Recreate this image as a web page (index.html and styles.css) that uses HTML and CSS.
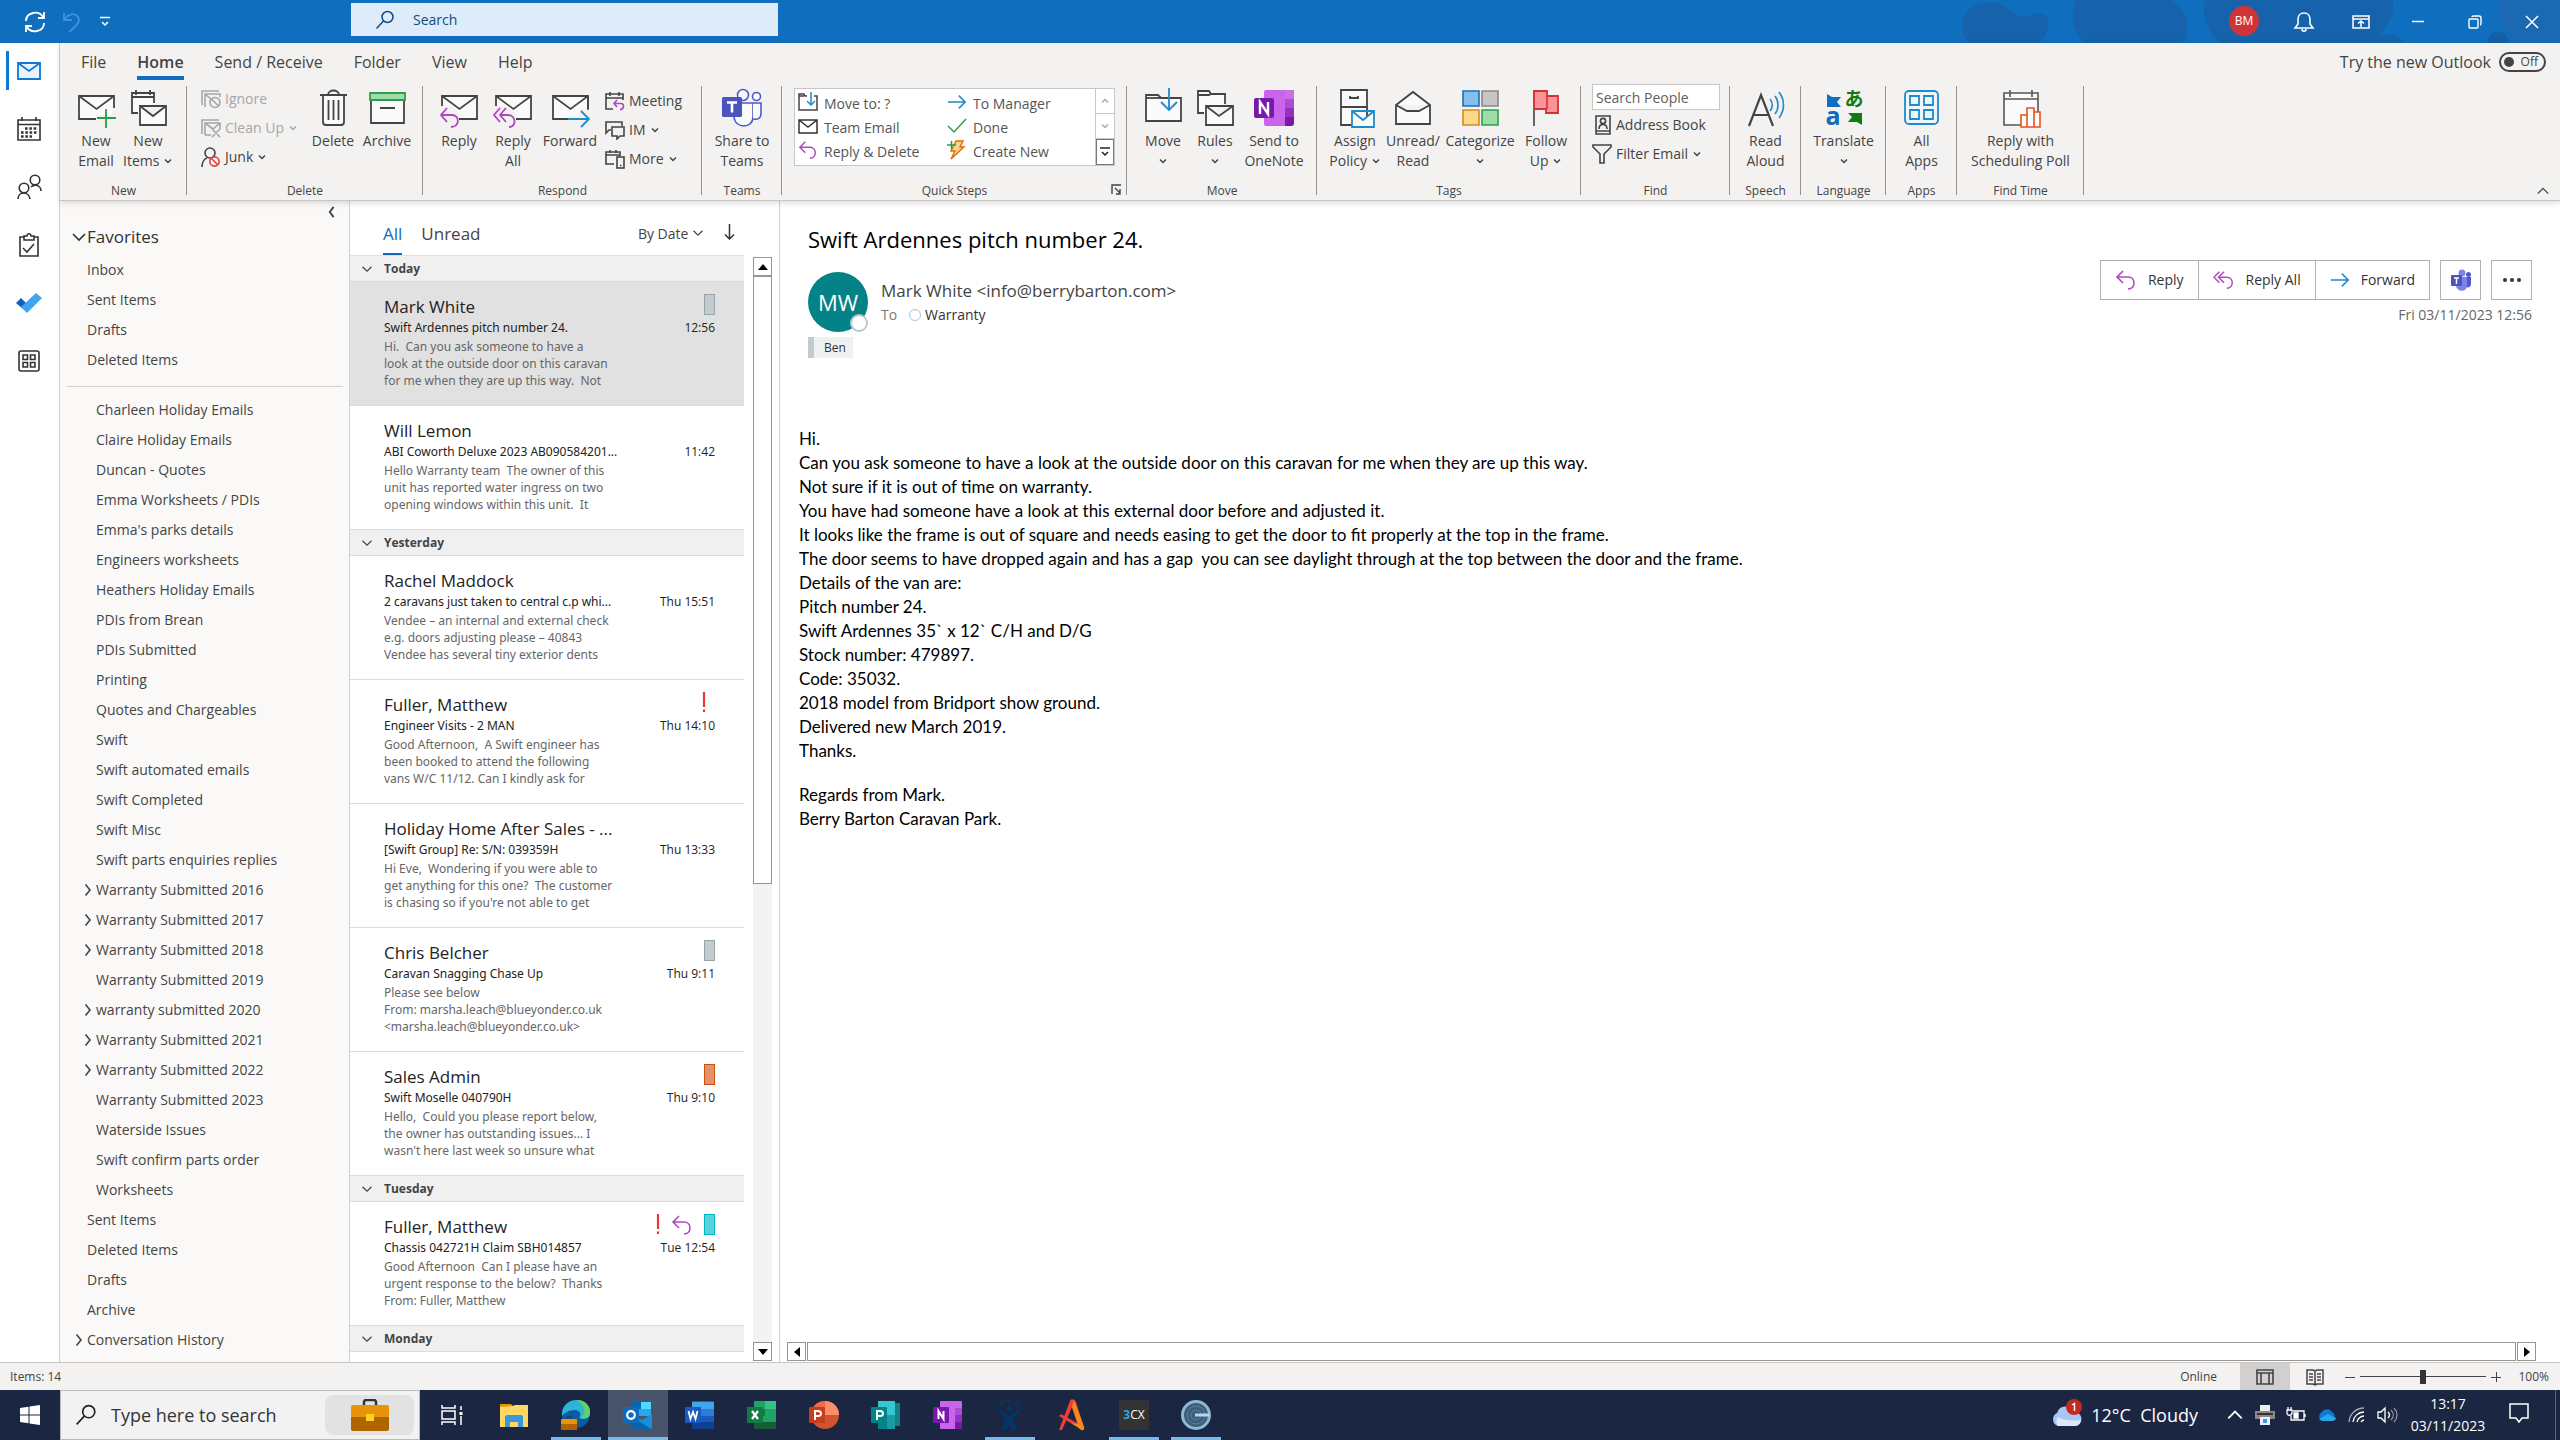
FILE: index.html
```html
<!DOCTYPE html>
<html lang="en">
<head>
<meta charset="utf-8">
<title>Inbox - Outlook</title>
<link rel="stylesheet" href="styles.css">
</head>
<body>
<svg class="sprite" aria-hidden="true">
  <symbol id="chev" viewBox="0 0 10 10"><path d="M2 3.500l3 3 3-3" fill="none" stroke="currentColor" stroke-width="1.500"/></symbol>
  <symbol id="chev-lg" viewBox="0 0 16 16"><path d="M2 5l6 6 6-6" fill="none" stroke="currentColor" stroke-width="1.600"/></symbol>
  <symbol id="chev-r" viewBox="0 0 8 14"><path d="M1.500 1.500l4.500 5.500-4.500 5.500" fill="none" stroke="currentColor" stroke-width="1.600"/></symbol>
  <symbol id="env" viewBox="0 0 40 40"><path d="M3 8h35v23H3z" fill="#fafafa" stroke="#444" stroke-width="1.800"/><path d="M3 8l17.500 13L38 8" fill="none" stroke="#444" stroke-width="1.600"/></symbol>
  <symbol id="reply" viewBox="0 0 22 22"><path d="M8 2L2 8l6 6M2 8h11c4 0 6 3 6 6s-2 6-6 6" fill="none" stroke="#b146c2" stroke-width="1.600"/></symbol>
  <symbol id="reply-all" viewBox="0 0 24 22"><path d="M7 2L1 8l6 6M12 2L6 8l6 6M6 8h9c4 0 6 3 6 6s-2 6-6 6" fill="none" stroke="#b146c2" stroke-width="1.600"/></symbol>
  <symbol id="fwd" viewBox="0 0 22 22"><path d="M1 11h19M13 4l7 7-7 7" fill="none" stroke="#1e8bcd" stroke-width="1.700"/></symbol>
  <symbol id="lens" viewBox="0 0 20 20"><circle cx="12.500" cy="7" r="5.500" fill="none" stroke="currentColor" stroke-width="1.500"/><path d="M8.500 11L1.500 18.500" stroke="currentColor" stroke-width="1.500"/></symbol>
  <symbol id="teams" viewBox="0 0 40 40"><path d="M12 15h19v14c0 12-18 12-19 0z" fill="#fafafa" stroke="#5059c9" stroke-width="1.600"/><path d="M31 15h8v11c0 4-3 6-8 5" fill="#fafafa" stroke="#5059c9" stroke-width="1.600"/><circle cx="21" cy="7" r="5.500" fill="#fafafa" stroke="#5059c9" stroke-width="1.600"/><circle cx="34.500" cy="8.500" r="4" fill="#fafafa" stroke="#5059c9" stroke-width="1.600"/><rect y="9" width="20" height="20" rx="1.500" fill="#4b53bc"/><path d="M5 14.500h10M10 14.500v10" stroke="#fff" stroke-width="2.600"/></symbol>
  <symbol id="teams-solid" viewBox="0 0 22 22"><circle cx="12" cy="4" r="3.500" fill="#7b83eb"/><circle cx="18.500" cy="5.500" r="2.500" fill="#5059c9"/><path d="M14 8h7v7c0 3-3 4-5 3z" fill="#5059c9"/><path d="M6 8h11v8c0 8-10 7-11 1z" fill="#7b83eb"/><rect x="1" y="6" width="11" height="11" rx="1" fill="#4b53bc"/><path d="M4 9h5M6.500 9v6" stroke="#fff" stroke-width="1.500"/></symbol>
</svg>

<header class="titlebar">
  <div class="quick">
    <button class="tb" aria-label="Send/Receive"><svg width="24" height="24" viewBox="0 0 24 24" fill="none" stroke="#fff" stroke-width="1.800"><path d="M3 11c0-9 13-11 17-4M21 2v6h-6M21 13c0 9-13 11-17 4M3 22v-6h6"/></svg></button>
    <button class="tb" aria-label="Undo"><svg width="24" height="24" viewBox="0 0 24 24" fill="none" stroke="#3b93e0" stroke-width="1.800"><path d="M3 3v7h8M3 10c3-5 9-8 13-4s2 8-8 16"/></svg></button>
    <button class="tb" aria-label="Customize"><svg width="12" height="12" viewBox="0 0 12 12" fill="none" stroke="#fff" stroke-width="1.500"><path d="M1 1.500h10M3 6l3 3 3-3"/></svg></button>
  </div>
  <label class="search"><svg width="20" height="20"><use href="#lens"/></svg><input type="text" placeholder="Search" aria-label="Search"></label>
  <svg class="art" width="600" height="43" viewBox="0 0 600 43" aria-hidden="true"><g fill="#1663ab"><path d="M8 43C-4 25 4 2 30 2c15 0 22 12 30 14 10 2 18-6 26 0 8 8-2 22-6 27z"/><path d="M116 0h95c18 12 20 30 12 43H124c-12-12-14-30-8-43z"/><path d="M245 0h188c2 14-6 28-16 36 14-4 24 0 28 7H260c-14-12-18-28-15-43z"/></g><g fill="#1b68b3"><path d="M540 0h60v43h-40c-20-12-26-28-20-43z"/><circle cx="538" cy="43" r="11" fill="#175fa5"/></g></svg>
  <div class="window">
    <button class="avatar-sm">BM</button>
    <button class="tb" aria-label="Notifications"><svg width="22" height="22" viewBox="0 0 22 22" fill="none" stroke="#fff" stroke-width="1.600"><path d="M2 17h18l-3-4V8c0-8-12-8-12 0v5zM9 18c0 3 4 3 4 0"/></svg></button>
    <button class="tb" aria-label="Ribbon display"><svg width="18" height="14" viewBox="0 0 18 14" fill="none" stroke="#fff" stroke-width="1.500"><path d="M1 1h16v12H1zM1 4h16M9 12V6M6 8.500L9 6l3 2.500"/></svg></button>
    <button class="tb" aria-label="Minimize"><svg width="14" height="14" viewBox="0 0 14 14" stroke="#fff" stroke-width="1.500"><path d="M1 6.500h12"/></svg></button>
    <button class="tb" aria-label="Restore"><svg width="14" height="14" viewBox="0 0 14 14" fill="none" stroke="#fff" stroke-width="1.400"><rect x="1" y="4" width="9" height="9" rx="1"/><path d="M4 2c0-1 1-1 2-1h5c1 0 2 1 2 2v5c0 1 0 2-1 2"/></svg></button>
    <button class="tb" aria-label="Close"><svg width="14" height="14" viewBox="0 0 14 14" stroke="#fff" stroke-width="1.500"><path d="M1 1l12 12M13 1L1 13"/></svg></button>
  </div>
</header>

<div class="shell">
  <nav class="rail" aria-label="Apps">
    <a href="#mail" class="on" aria-label="Mail"><svg width="24" height="18" viewBox="0 0 24 18" fill="none" stroke="#0f78d4" stroke-width="1.800"><path d="M1 1h22v16H1z" fill="#e8f3fc"/><path d="M1 1l11 8 11-8"/></svg></a>
    <a href="#calendar" aria-label="Calendar"><svg width="24" height="24" viewBox="0 0 24 24" fill="none" stroke="#333" stroke-width="1.600"><path d="M1 3h22v20H1zM1 7.500h22M5 0v4M19 0v4"/><path d="M8 11.500h13M4 15.500h17M4 19.500h11" stroke-width="2.400" stroke-dasharray="2.600 1.700"/></svg></a>
    <a href="#people" aria-label="People"><svg width="25" height="25" viewBox="0 0 25 25" fill="none" stroke="#333" stroke-width="1.600"><circle cx="7" cy="14" r="4.800"/><path d="M1 25c0-8 11-8 12 0"/><circle cx="18" cy="6" r="4.800"/><path d="M14 13c4-4 10-1 10 4"/></svg></a>
    <a href="#tasks" aria-label="Tasks"><svg width="20" height="24" viewBox="0 0 20 24" fill="none" stroke="#333" stroke-width="1.600"><path d="M5 4H1v19h18V4h-4"/><path d="M5 3h3c0-3 4-3 4 0h3v4H5zM4 15l4 4 7-8"/></svg></a>
    <a href="#todo" aria-label="To Do"><svg width="26" height="20" viewBox="0 0 26 20"><path d="M0 10l5-5 6 6-4 5z" fill="#185abd"/><path d="M5 14L20 0l6 5-15 15z" fill="#41a5ee"/></svg></a>
    <a href="#apps" aria-label="More apps"><svg width="22" height="22" viewBox="0 0 22 22" fill="none" stroke="#333" stroke-width="1.600"><rect x="1" y="1" width="20" height="20" rx="2"/><path d="M5 5h4.500v4.500H5zM12.500 5H17v4.500h-4.500zM5 12.500h4.500V17H5zM12.500 12.500H17V17h-4.500z"/></svg></a>
  </nav>

  <div class="app">
    <section class="ribbon">
      <div class="tabs">
        <button>File</button><button class="on">Home</button><button>Send / Receive</button><button>Folder</button><button>View</button><button>Help</button>
        <label class="try">Try the new Outlook<span class="toggle"><input type="checkbox">Off</span></label>
      </div>
      <div class="groups">
        <div class="group g-new">
          <div class="tools">
            <button class="big w52"><svg viewBox="0 0 40 40"><use href="#env"/><path d="M20 27h20v8H20zM36 20h4v12h-4z" fill="#f3f2f1"/><path d="M21 30h19M30 21v19" stroke="#28a04a" stroke-width="1.800"/></svg><span>New<br>Email</span></button>
            <button class="big w52"><svg viewBox="0 0 40 40" fill="#fafafa" stroke="#444" stroke-width="1.800"><path d="M10 25H4V5h22v10M4 9h22M8 2v5M22 2v5"/><path d="M12 18h26v19H12zM12 18l13 10 13-10"/></svg><span>New<br>Items <svg class="c"><use href="#chev"/></svg></span></button>
          </div>
          <h2>New</h2>
        </div>
        <div class="group g-delete">
          <div class="tools">
            <div class="stack s104">
              <button class="small" disabled><svg viewBox="0 0 20 20" fill="none" stroke="#a6a6a6" stroke-width="1.600"><path d="M1 16V2h17M4 18V5h15v3M4 5l7 6"/><circle cx="14" cy="13.500" r="5"/><path d="M10.500 10l7 7"/></svg>Ignore</button>
              <button class="small" disabled><svg viewBox="0 0 20 20" fill="none" stroke="#a6a6a6" stroke-width="1.600"><path d="M1 16V2h17M4 17V5h15v6M4 5l8 6 7-6M4 17h6M11 11l8 8M19 11l-8 8"/></svg>Clean Up <svg class="c"><use href="#chev"/></svg></button>
              <button class="small"><svg viewBox="0 0 20 20" fill="none" stroke="#444" stroke-width="1.600"><circle cx="9" cy="6" r="5"/><path d="M1 20c0-4 2-8 5-9"/><circle cx="13.500" cy="14.500" r="4.600" stroke="#e8383d" fill="#fff"/><path d="M10.500 11.500l6 6" stroke="#e8383d"/></svg>Junk <svg class="c"><use href="#chev"/></svg></button>
            </div>
            <button class="big w56"><svg viewBox="0 0 40 40" fill="none" stroke="#444" stroke-width="1.800"><path d="M10 7h21v27c0 2-1 3-3 3H13c-2 0-3-1-3-3z" fill="#fafafa"/><path d="M7 7h27M15 7c0-6 11-6 11 0M15.500 12v20M20.500 12v20M25.500 12v20"/></svg><span>Delete</span></button>
            <button class="big w52"><svg viewBox="0 0 40 40"><path d="M4 12h33v23H4z" fill="#fafafa" stroke="#444" stroke-width="1.800"/><path d="M3 5h35v7H3z" fill="#9fdda8" stroke="#2f9e50" stroke-width="1.800"/><path d="M13 20h15" stroke="#444" stroke-width="2"/></svg><span>Archive</span></button>
          </div>
          <h2>Delete</h2>
        </div>
        <div class="group g-respond">
          <div class="tools">
            <button class="big w54"><svg viewBox="0 0 40 40"><use href="#env"/><path d="M0 18h13l7 8v14H0z" fill="#f3f2f1"/><path d="M8 20l-6 7 6 7M2 27h11c8 0 8 12-1 12" fill="none" stroke="#b146c2" stroke-width="1.800"/></svg><span>Reply</span></button>
            <button class="big w54"><svg viewBox="0 0 40 40"><use href="#env"/><path d="M0 18h15l8 8v14H0z" fill="#f3f2f1"/><path d="M7 20l-6 7 6 7M13 20l-6 7 6 7M7 27h8c8 0 9 12 1 12" fill="none" stroke="#b146c2" stroke-width="1.800"/></svg><span>Reply<br>All</span></button>
            <button class="big w60"><svg viewBox="0 0 40 40"><use href="#env"/><path d="M19 28h21v6H19zM30 20h10v10H30z" fill="#f3f2f1"/><path d="M18 31h21M31 23l8 8-8 8M38 8v14" fill="none" stroke="#1e8bcd" stroke-width="1.800"/><path d="M38 8v13" stroke="#444" stroke-width="1.800"/></svg><span>Forward</span></button>
            <div class="stack resp">
              <button class="small"><svg viewBox="0 0 20 20" fill="none" stroke="#444" stroke-width="1.600"><path d="M8 18H1V3h17v6M1 7h17M5 1v4M14 1v4"/><path d="M12 9l-3 3.500 3 3.500M9 12.500h7c4 0 3 6-1 6" stroke="#b146c2"/></svg>Meeting</button>
              <button class="small"><svg viewBox="0 0 20 20" fill="none" stroke="#444" stroke-width="1.600"><path d="M6 10H4l-3 3V2h16v4"/><path d="M7 7h12v9h-4l-3 3v-3H7z"/></svg>IM <svg class="c"><use href="#chev"/></svg></button>
              <button class="small"><svg viewBox="0 0 20 20" fill="none" stroke="#444" stroke-width="1.600"><path d="M9 15H1V3h14v4M1 6h14M5 1v3M11 1v3"/><rect x="12" y="8" width="7" height="11"/><path d="M15 16.500h1.500"/></svg>More <svg class="c"><use href="#chev"/></svg></button>
            </div>
          </div>
          <h2>Respond</h2>
        </div>
        <div class="group g-teams"><div class="tools"><button class="big w60"><svg viewBox="0 0 40 40"><use href="#teams"/></svg><span>Share to<br>Teams</span></button></div><h2>Teams</h2></div>
        <div class="group g-quick">
          <div class="tools">
            <div class="gallery">
              <div class="steps">
                <button><svg viewBox="0 0 20 20" fill="none" stroke="#444" stroke-width="1.500"><path d="M9 4H7L6 2H1v16h18V4h-3M1 4h5"/><path d="M13 0v13M9 9l4 4 4-4" stroke="#1e8bcd"/></svg>Move to: ?</button>
                <button><svg viewBox="0 0 22 22"><use href="#fwd"/></svg>To Manager</button>
                <button><svg viewBox="0 0 20 20" fill="none" stroke="#333" stroke-width="1.500"><path d="M1 4h18v13H1zM1 4l9 7 9-7"/></svg>Team Email</button>
                <button><svg viewBox="0 0 20 20" fill="none" stroke="#2f9e50" stroke-width="1.500"><path d="M1 10l6 6L19 3"/></svg>Done</button>
                <button><svg viewBox="0 0 22 22"><use href="#reply"/></svg>Reply &amp; Delete</button>
                <button><svg viewBox="0 0 20 20"><path d="M9 1h7l-3 6h4L4 19l4-8H4z" fill="#fcd48a" stroke="#e06c00" stroke-width="1.400"/><path d="M0 5h9M4.500 1v8" stroke="#28a04a" stroke-width="1.600"/></svg>Create New</button>
              </div>
              <div class="spin">
                <button disabled aria-label="Up"><svg class="c up"><use href="#chev"/></svg></button>
                <button disabled aria-label="Down"><svg class="c"><use href="#chev"/></svg></button>
                <button class="more" aria-label="More"><svg width="10" height="12" viewBox="0 0 10 12" fill="none" stroke="#222" stroke-width="1.500"><path d="M0 2h10M2 6l3 3 3-3"/></svg></button>
              </div>
            </div>
          </div>
          <h2>Quick Steps</h2>
          <button class="launch" aria-label="Manage quick steps"><svg width="11" height="11" viewBox="0 0 11 11" fill="none" stroke="#444" stroke-width="1.400"><path d="M1 10V1h9M4 4l5 5M9 5v5H5"/></svg></button>
        </div>
        <div class="group g-move">
          <div class="tools">
            <button class="big w52"><svg viewBox="0 0 40 40"><path d="M3 33V7h12l3 3h20v23z" fill="#fafafa" stroke="#444" stroke-width="1.800"/><path d="M3 10h15" fill="none" stroke="#444" stroke-width="1.800"/><path d="M26 0v22M18 14l8 8 8-8" fill="none" stroke="#1e8bcd" stroke-width="1.800"/></svg><span>Move<br><svg class="c"><use href="#chev"/></svg></span></button>
            <button class="big w52"><svg viewBox="0 0 40 40" fill="#fafafa" stroke="#444" stroke-width="1.800"><path d="M9 25H3V3h11l2 3h14v10M3 7h11l2-1"/><path d="M11 18h27v19H11zM11 18l13 10 14-10"/></svg><span>Rules<br><svg class="c"><use href="#chev"/></svg></span></button>
            <button class="big w66"><svg viewBox="0 0 40 40"><rect x="10" y="2" width="30" height="36" rx="2" fill="#ca64ea"/><path d="M31 2h9v9h-9z" fill="#c870e8"/><path d="M31 11h9v9h-9z" fill="#ae4bd5"/><path d="M31 20h9v9h-9z" fill="#9332bf"/><path d="M31 29h9v7l-2 2h-7z" fill="#7719aa"/><rect y="10" width="20" height="20" rx="2" fill="#7719aa"/><path d="M6 26V14l8 12V14" fill="none" stroke="#fff" stroke-width="2.400"/></svg><span>Send to<br>OneNote</span></button>
          </div>
          <h2>Move</h2>
        </div>
        <div class="group g-tags">
          <div class="tools">
            <button class="big w58"><svg viewBox="0 0 40 40" fill="#fafafa" stroke="#444" stroke-width="1.800"><path d="M6 2h26v35H6zM6 19h26M15 8v2h8V8"/><path d="M17 23h22v16H17zM17 23l11 9 11-9" stroke="#1e8bcd"/></svg><span>Assign<br>Policy <svg class="c"><use href="#chev"/></svg></span></button>
            <button class="big w58"><svg viewBox="0 0 40 40" fill="#fafafa" stroke="#444" stroke-width="1.800"><path d="M3 17L20 4l17 13v19H3zM3 17l11 6h12l11-6"/></svg><span>Unread/<br>Read</span></button>
            <button class="big w76"><svg viewBox="0 0 40 40" stroke-width="1.600"><path d="M3 3h16v15H3z" fill="#83beec" stroke="#1e6fb5"/><path d="M22 3h16v15H22z" fill="#c8c6c4" stroke="#8a8886"/><path d="M3 22h16v15H3z" fill="#fad98a" stroke="#d98a1c"/><path d="M22 22h16v15H22z" fill="#9fdda8" stroke="#2f9e50"/></svg><span>Categorize<br><svg class="c"><use href="#chev"/></svg></span></button>
            <button class="big w56"><svg viewBox="0 0 40 40"><path d="M8 3v35" stroke="#555" stroke-width="1.800"/><path d="M8 3h13v5h11v17H20v-4H8z" fill="#ff9199" stroke="#d13438" stroke-width="1.800"/><path d="M21 8v13" stroke="#d13438" stroke-width="1.600"/></svg><span>Follow<br>Up <svg class="c"><use href="#chev"/></svg></span></button>
          </div>
          <h2>Tags</h2>
        </div>
        <div class="group g-find">
          <div class="tools">
            <div class="stack">
              <input class="people" type="text" placeholder="Search People" aria-label="Search People">
              <button class="small"><svg viewBox="0 0 20 20" fill="none" stroke="#444" stroke-width="1.600"><path d="M4 1h14v18H4zM4 16h14"/><circle cx="11" cy="6" r="2.600"/><path d="M7 14c0-6 8-6 8 0"/></svg>Address Book</button>
              <button class="small"><svg viewBox="0 0 20 20" fill="none" stroke="#444" stroke-width="1.600"><path d="M1 1h18v2l-7 7v9H8v-9L1 3z"/></svg>Filter Email <svg class="c"><use href="#chev"/></svg></button>
            </div>
          </div>
          <h2>Find</h2>
        </div>
        <div class="group g-speech"><div class="tools"><button class="big w60"><svg viewBox="0 0 40 40" fill="none"><path d="M3 38L15 7l12 31M7 27h16" stroke="#444" stroke-width="2.200"/><path d="M24 11c3 3 3 9 0 12M29 8c4 5 4 13 0 18M33 4c6 8 6 18 0 26" stroke="#1e8bcd" stroke-width="1.600"/></svg><span>Read<br>Aloud</span></button></div><h2>Speech</h2></div>
        <div class="group g-lang"><div class="tools"><button class="big w60"><span class="glyphs"><i class="latin">a</i><i class="kana">あ</i><svg viewBox="0 0 40 40"><path d="M3 6l5 3h9l-4 5 4 5H3z" fill="#106ebe"/><path d="M38 37l-5-3h-9l4-5-4-4h14z" fill="#107c10"/></svg></span><span>Translate<br><svg class="c"><use href="#chev"/></svg></span></button></div><h2>Language</h2></div>
        <div class="group g-speech"><div class="tools"><button class="big w60"><svg viewBox="0 0 40 40" fill="#eef6fc" stroke="#1e8bcd" stroke-width="1.800"><rect x="3" y="3" width="33" height="33" rx="4"/><path d="M8 8h9v9H8zM22 8h9v9h-9zM8 22h9v9H8zM22 22h9v9h-9z"/></svg><span>All<br>Apps</span></button></div><h2>Apps</h2></div>
        <div class="group g-new center"><div class="tools"><button class="big w60"><svg viewBox="0 0 40 40"><path d="M3 5h34v32H3zM3 11h34M9 2v7M31 2v7" fill="#fafafa" stroke="#555" stroke-width="1.600"/><path d="M20 39V27h6v12zM26 39V20h7v19zM33 39V24h6v15z" fill="#fff" stroke="#e8501f" stroke-width="1.600"/></svg><span>Reply with<br>Scheduling Poll</span></button></div><h2>Find Time</h2></div>
        <button class="collapse" aria-label="Collapse ribbon"><svg class="up" width="14" height="14"><use href="#chev-lg"/></svg></button>
      </div>
    </section>

    <div class="panes">
      <nav class="folders" aria-label="Folders">
        <button class="fold" aria-label="Minimize folder pane"><svg width="7" height="12" viewBox="0 0 8 14"><path d="M6.500 1L2 7l4.500 6" fill="none" stroke="#444" stroke-width="2.200"/></svg></button>
        <h2><svg width="16" height="16"><use href="#chev-lg"/></svg>Favorites</h2>
        <ul class="top">
          <li><a href="#f">Inbox</a></li><li><a href="#f">Sent Items</a></li><li><a href="#f">Drafts</a></li><li><a href="#f">Deleted Items</a></li>
        </ul>
        <ul class="tree">
          <li><a href="#f">Charleen Holiday Emails</a></li>
          <li><a href="#f">Claire Holiday Emails</a></li>
          <li><a href="#f">Duncan - Quotes</a></li>
          <li><a href="#f">Emma Worksheets / PDIs</a></li>
          <li><a href="#f">Emma's parks details</a></li>
          <li><a href="#f">Engineers worksheets</a></li>
          <li><a href="#f">Heathers Holiday Emails</a></li>
          <li><a href="#f">PDIs from Brean</a></li>
          <li><a href="#f">PDIs Submitted</a></li>
          <li><a href="#f">Printing</a></li>
          <li><a href="#f">Quotes and Chargeables</a></li>
          <li><a href="#f">Swift</a></li>
          <li><a href="#f">Swift automated emails</a></li>
          <li><a href="#f">Swift Completed</a></li>
          <li><a href="#f">Swift Misc</a></li>
          <li><a href="#f">Swift parts enquiries replies</a></li>
          <li class="has"><svg><use href="#chev-r"/></svg><a href="#f">Warranty Submitted 2016</a></li>
          <li class="has"><svg><use href="#chev-r"/></svg><a href="#f">Warranty Submitted 2017</a></li>
          <li class="has"><svg><use href="#chev-r"/></svg><a href="#f">Warranty Submitted 2018</a></li>
          <li><a href="#f">Warranty Submitted 2019</a></li>
          <li class="has"><svg><use href="#chev-r"/></svg><a href="#f">warranty submitted 2020</a></li>
          <li class="has"><svg><use href="#chev-r"/></svg><a href="#f">Warranty Submitted 2021</a></li>
          <li class="has"><svg><use href="#chev-r"/></svg><a href="#f">Warranty Submitted 2022</a></li>
          <li><a href="#f">Warranty Submitted 2023</a></li>
          <li><a href="#f">Waterside Issues</a></li>
          <li><a href="#f">Swift confirm parts order</a></li>
          <li><a href="#f">Worksheets</a></li>
        </ul>
        <ul class="roots">
          <li><a href="#f">Sent Items</a></li><li><a href="#f">Deleted Items</a></li><li><a href="#f">Drafts</a></li><li><a href="#f">Archive</a></li>
          <li class="has"><svg><use href="#chev-r"/></svg><a href="#f">Conversation History</a></li>
        </ul>
      </nav>

      <section class="list">
        <div class="filters">
          <button class="on">All</button><button>Unread</button>
          <button class="sort">By Date <svg width="12" height="12"><use href="#chev-lg"/></svg></button>
          <button class="dir" aria-label="Sort direction"><svg width="11" height="16" viewBox="0 0 11 16" fill="none" stroke="#333" stroke-width="1.500"><path d="M5.500 0v15M1 10.500L5.500 15 10 10.500"/></svg></button>
        </div>
        <div class="scroller">
          <div class="messages">
            <h3><svg width="12" height="12"><use href="#chev-lg"/></svg>Today</h3>
            <article class="msg sel"><h4>Mark White</h4><div class="marks"><i class="cat grey"></i></div><p class="subj">Swift Ardennes pitch number 24.</p><time>12:56</time><p class="prev">Hi.&nbsp; Can you ask someone to have a<br>look at the outside door on this caravan<br>for me when they are up this way.&nbsp; Not</p></article>
            <article class="msg"><h4>Will Lemon</h4><div class="marks"></div><p class="subj">ABI Coworth Deluxe 2023 AB090584201...</p><time>11:42</time><p class="prev">Hello Warranty team&nbsp; The owner of this<br>unit has reported water ingress on two<br>opening windows within this unit.&nbsp; It</p></article>
            <h3><svg width="12" height="12"><use href="#chev-lg"/></svg>Yesterday</h3>
            <article class="msg"><h4>Rachel Maddock</h4><div class="marks"></div><p class="subj">2 caravans just taken to central c.p whi...</p><time>Thu 15:51</time><p class="prev">Vendee – an internal and external check<br>e.g. doors adjusting please – 40843<br>Vendee has several tiny exterior dents</p></article>
            <article class="msg"><h4>Fuller, Matthew</h4><div class="marks pad"><svg class="bang" viewBox="0 0 4 20"><path d="M2 0v15M2 17.500v2.500" stroke="#e8383d" stroke-width="2.200"/></svg></div><p class="subj">Engineer Visits - 2 MAN</p><time>Thu 14:10</time><p class="prev">Good Afternoon,&nbsp; A Swift engineer has<br>been booked to attend the following<br>vans W/C 11/12. Can I kindly ask for</p></article>
            <article class="msg"><h4>Holiday Home After Sales - ...</h4><div class="marks"></div><p class="subj">[Swift Group] Re: S/N: 039359H</p><time>Thu 13:33</time><p class="prev">Hi Eve,&nbsp; Wondering if you were able to<br>get anything for this one?&nbsp; The customer<br>is chasing so if you're not able to get</p></article>
            <article class="msg"><h4>Chris Belcher</h4><div class="marks"><i class="cat grey"></i></div><p class="subj">Caravan Snagging Chase Up</p><time>Thu 9:11</time><p class="prev">Please see below<br>From: marsha.leach@blueyonder.co.uk<br>&lt;marsha.leach@blueyonder.co.uk&gt;</p></article>
            <article class="msg"><h4>Sales Admin</h4><div class="marks"><i class="cat orange"></i></div><p class="subj">Swift Moselle 040790H</p><time>Thu 9:10</time><p class="prev">Hello,&nbsp; Could you please report below,<br>the owner has outstanding issues... I<br>wasn't here last week so unsure what</p></article>
            <h3><svg width="12" height="12"><use href="#chev-lg"/></svg>Tuesday</h3>
            <article class="msg"><h4>Fuller, Matthew</h4><div class="marks"><svg class="bang" viewBox="0 0 4 20"><path d="M2 0v15M2 17.500v2.500" stroke="#e8383d" stroke-width="2.200"/></svg><svg width="22" height="22"><use href="#reply"/></svg><i class="cat teal"></i></div><p class="subj">Chassis 042721H Claim SBH014857</p><time>Tue 12:54</time><p class="prev">Good Afternoon&nbsp; Can I please have an<br>urgent response to the below?&nbsp; Thanks<br>From: Fuller, Matthew</p></article>
            <h3><svg width="12" height="12"><use href="#chev-lg"/></svg>Monday</h3>
          </div>
          <div class="vbar">
            <button aria-label="Scroll up"><svg width="10" height="6" viewBox="0 0 10 6"><path d="M0 6l5-6 5 6z"/></svg></button>
            <div class="vtrack"><div class="vthumb"></div></div>
            <button aria-label="Scroll down"><svg width="10" height="6" viewBox="0 0 10 6"><path d="M0 0l5 6 5-6z"/></svg></button>
          </div>
        </div>
      </section>

      <main class="reading">
        <h1>Swift Ardennes pitch number 24.</h1>
        <div class="head">
          <div class="avatar">MW<i></i></div>
          <div class="who"><div class="from">Mark White &lt;info@berrybarton.com&gt;</div><div class="to"><span>To</span><i></i>Warranty</div></div>
          <div class="side">
            <div class="actions">
              <div class="seg">
                <button><svg width="22" height="22"><use href="#reply"/></svg>Reply</button>
                <button><svg width="22" height="22"><use href="#reply-all"/></svg>Reply All</button>
                <button><svg width="20" height="20"><use href="#fwd"/></svg>Forward</button>
              </div>
              <button class="sq" aria-label="Share to Teams"><svg width="22" height="22"><use href="#teams-solid"/></svg></button>
              <button class="sq" aria-label="More actions"><svg width="20" height="6" viewBox="0 0 20 6" fill="#333"><circle cx="3" cy="3" r="2"/><circle cx="10" cy="3" r="2"/><circle cx="17" cy="3" r="2"/></svg></button>
            </div>
            <time>Fri 03/11/2023 12:56</time>
          </div>
        </div>
        <span class="tag">Ben</span>
        <div class="body">
          <p>Hi.</p>
          <p>Can you ask someone to have a look at the outside door on this caravan for me when they are up this way.</p>
          <p>Not sure if it is out of time on warranty.</p>
          <p>You have had someone have a look at this external door before and adjusted it.</p>
          <p>It looks like the frame is out of square and needs easing to get the door to fit properly at the top in the frame.</p>
          <p>The door seems to have dropped again and has a gap&nbsp; you can see daylight through at the top between the door and the frame.</p>
          <p>Details of the van are:</p>
          <p>Pitch number 24.</p>
          <p>Swift Ardennes 35` x 12` C/H and D/G</p>
          <p>Stock number: 479897.</p>
          <p>Code: 35032.</p>
          <p>2018 model from Bridport show ground.</p>
          <p>Delivered new March 2019.</p>
          <p>Thanks.</p>
          <p class="sign">Regards from Mark.</p>
          <p>Berry Barton Caravan Park.</p>
        </div>
        <div class="hbar">
          <button aria-label="Scroll left"><svg width="6" height="10" viewBox="0 0 6 10"><path d="M6 0L0 5l6 5z"/></svg></button>
          <div class="hthumb"></div>
          <button aria-label="Scroll right"><svg width="6" height="10" viewBox="0 0 6 10"><path d="M0 0l6 5-6 5z"/></svg></button>
        </div>
      </main>
    </div>
  </div>
</div>

<footer class="status">
  <span>Items: 14</span>
  <span class="online">Online</span>
  <button class="view on" aria-label="Normal view"><svg width="18" height="16" viewBox="0 0 18 16" fill="none" stroke="#444" stroke-width="1.600"><path d="M1 1h16v14H1zM1 4h16M5 4v11M13 4v11"/></svg></button>
  <button class="view" aria-label="Reading view"><svg width="18" height="18" viewBox="0 0 18 18" fill="none" stroke="#444" stroke-width="1.500"><path d="M1 2h6l2 1 2-1h6v14h-6l-2 1-2-1H1zM9 3v14M3 6h4M3 9h4M3 12h4M11 6h4M11 9h4M11 12h4"/></svg></button>
  <button class="z" aria-label="Zoom out"><svg width="10" height="10" viewBox="0 0 10 10" stroke="#444"><path d="M0 5.500h10"/></svg></button>
  <input class="zoom" type="range" min="0" max="100" value="50" aria-label="Zoom">
  <button class="z" aria-label="Zoom in"><svg width="10" height="10" viewBox="0 0 10 10" stroke="#444"><path d="M0 5.500h10M5.500 0v10"/></svg></button>
  <span class="pct">100%</span>
</footer>

<div class="taskbar">
  <button class="start" aria-label="Start"><svg width="20" height="20" viewBox="0 0 20 20" fill="#fff"><path d="M0 3l8.500-1.200v7.700H0zM9.500 1.600L20 0v9.500H9.500zM0 10.500h8.500v7.700L0 17zM9.500 10.500H20V20L9.500 18.400z"/></svg></button>
  <label class="find"><svg width="22" height="22"><use href="#lens"/></svg><input type="text" placeholder="Type here to search" aria-label="Type here to search"><span class="promo"><svg width="38" height="32" viewBox="0 0 38 32"><path d="M13 6V3c0-1 1-2 2-2h8c1 0 2 1 2 2v3" fill="none" stroke="#333" stroke-width="2.500"/><rect y="6" width="38" height="13" rx="2" fill="#e8940a"/><path d="M0 18h38v12c0 1-1 2-2 2H2c-1 0-2-1-2-2z" fill="#b06400"/><rect x="15" y="15" width="8" height="7" fill="#ffd21f"/></svg></span></label>
  <div class="apps">
    <button aria-label="Task view"><svg width="22" height="20" viewBox="0 0 22 20" fill="none" stroke="#fff" stroke-width="1.500"><path d="M1 0v3h13V0M1 20v-3h13v3M1 6h13v8H1zM20 1v4M20 11v9"/><path d="M18.500 7h3v3h-3z" fill="#fff" stroke="none"/></svg></button>
    <button aria-label="File Explorer"><svg width="30" height="26" viewBox="0 0 30 26"><path d="M1 2h11l3 3H1z" fill="#dc9a08"/><path d="M1 5l13-1 2-1h13v22H1z" fill="#ffd765"/><path d="M6 25V15c0-1 1-2 2-2h14c1 0 2 1 2 2v10h-5v-5h-8v5z" fill="#3a96dd"/></svg></button>
    <button class="run" aria-label="Edge"><svg width="32" height="32" viewBox="0 0 32 32"><circle cx="16" cy="15" r="14" fill="#0c59a4"/><path d="M2 14C3 5 10 1 17 1c9 0 14 7 13 14-1 5-6 6-11 4 3-3 1-8-4-8-6 0-11 3-13 6z" fill="#2fb4d8"/><path d="M17 1c9 0 14 7 13 14-1 4-5 5-9 4 6-5 4-12-4-18z" fill="#5fd368"/><rect x="1" y="20" width="16" height="11" rx="1" fill="#e8940a"/><path d="M1 25h16v6H1z" fill="#b06400"/><path d="M7 20v-2h4v2" fill="none" stroke="#333"/></svg></button>
    <button class="run active" aria-label="Outlook"><svg width="30" height="30" viewBox="0 0 30 30"><path d="M8 2h20v14H8z" fill="#28a8ea"/><path d="M18 2h10v7H18z" fill="#50d9ff"/><path d="M8 2h10v7H8z" fill="#0364b8"/><path d="M8 14l11 6 10-6v13c0 1-1 2-2 2H8z" fill="#1490df"/><path d="M8 16l20 13H8z" fill="#0a63a9"/><rect y="7" width="16" height="16" rx="1" fill="#0f6cbd"/><circle cx="8" cy="15" r="3.800" fill="none" stroke="#fff" stroke-width="2.200"/></svg></button>
    <button aria-label="Word"><svg width="30" height="30" viewBox="0 0 30 30"><rect x="7" y="1" width="22" height="28" rx="1" fill="#185abd"/><path d="M7 2h22v7H7z" fill="#41a5ee"/><path d="M7 9h22v7H7z" fill="#2b7cd3"/><path d="M7 22h22v7H7z" fill="#103f91"/><rect y="7" width="16" height="16" rx="1" fill="#185abd"/><path d="M3.500 11l2 8L8 12l2.500 7 2-8" fill="none" stroke="#fff" stroke-width="1.800"/></svg></button>
    <button aria-label="Excel"><svg width="30" height="30" viewBox="0 0 30 30"><rect x="7" y="1" width="22" height="28" rx="1" fill="#21a366"/><path d="M18 1h11v8H18z" fill="#33c481"/><path d="M7 9h11v7H7z" fill="#107c41"/><path d="M7 22h22v7H7z" fill="#185c37"/><rect y="7" width="16" height="16" rx="1" fill="#107c41"/><path d="M5 11l6 8M11 11l-6 8" stroke="#fff" stroke-width="2.200"/></svg></button>
    <button aria-label="PowerPoint"><svg width="30" height="30" viewBox="0 0 30 30"><circle cx="16" cy="15" r="14" fill="#d35230"/><path d="M16 1a14 14 0 0 1 14 14H16z" fill="#ff8f6b"/><path d="M16 1v14H2A14 14 0 0 1 16 1z" fill="#ed6c47"/><rect y="7" width="16" height="16" rx="1" fill="#c43e1c"/><path d="M6 20v-9h3c4 0 4 5 0 5H6" fill="none" stroke="#fff" stroke-width="2"/></svg></button>
    <button aria-label="Publisher"><svg width="30" height="30" viewBox="0 0 30 30"><path d="M20 3h9v23h-9z" fill="#128286"/><path d="M7 1h17v14H7z" fill="#37c6d0"/><path d="M16 15h8v14h-8z" fill="#1a9ba1"/><path d="M7 15h9v14H7z" fill="#038387"/><rect y="7" width="16" height="16" rx="1" fill="#038387"/><path d="M6 20v-9h3c4 0 4 5 0 5H6" fill="none" stroke="#fff" stroke-width="2"/></svg></button>
    <button aria-label="OneNote"><svg width="30" height="30" viewBox="0 0 30 30"><rect x="7" y="1" width="22" height="28" rx="1" fill="#ca64ea"/><path d="M22 8h7v7h-7z" fill="#ae4bd5"/><path d="M22 15h7v7h-7z" fill="#9332bf"/><path d="M22 22h7v7h-7z" fill="#7719aa"/><rect y="7" width="16" height="16" rx="1" fill="#7719aa"/><path d="M5.500 19v-8l5 8v-8" fill="none" stroke="#fff" stroke-width="2"/></svg></button>
    <button class="run" aria-label="Service desk"><svg width="24" height="32" viewBox="0 0 24 32" fill="#00376b"><circle cx="4" cy="4" r="2"/><circle cx="11" cy="2" r="2"/><circle cx="19" cy="4" r="2"/><circle cx="11.500" cy="10" r="2.500"/><path d="M0 7c4 9 13 9 17 18l1 6h-5c0-8-11-12-13-24zM23 7c-1 7-5 9-9 13l-3-3c5-3 8-5 12-10zM9 20l3 3c-2 2-3 5-3 8H4c0-5 2-8 5-11z"/></svg></button>
    <button aria-label="Autodesk"><svg width="28" height="32" viewBox="0 0 28 32"><path d="M12 2c1-3 5-2 6 1l8 25c1 4-3 4-5 1L1 17l2-2 16 9-5-16L4 31l-3 0z" fill="#ee4136"/><path d="M16 1l10 27c1 4-3 4-5 1l-8-5 7 1-6-17z" fill="#f78a1d"/></svg></button>
    <button class="run" aria-label="3CX"><span class="cx"><b>3</b>CX</span></button>
    <button class="run" aria-label="Disc"><svg width="30" height="30" viewBox="0 0 30 30"><circle cx="15" cy="15" r="13.500" fill="#3e5f7c" stroke="#8fb8d2" stroke-width="3"/><circle cx="15" cy="15" r="9" fill="none" stroke="#5d819e"/><circle cx="15" cy="15" r="5" fill="none" stroke="#5d819e"/><path d="M14 15h14" stroke="#b9d6e8" stroke-width="3"/></svg></button>
  </div>
  <div class="tray">
    <button class="weather"><svg width="32" height="32" viewBox="0 0 32 32"><path d="M7 27a7 7 0 0 1-1-13 9 9 0 0 1 17-1 7 7 0 0 1 1 14z" fill="#a9c7f5"/><path d="M7 27a7 7 0 0 1 0-9c6 4 16 4 23 3a6 6 0 0 1-6 6z" fill="#dce9fd"/><circle cx="23" cy="8" r="8" fill="#c42b1c"/><path d="M21 6l2.500-1.500V12" fill="none" stroke="#fff" stroke-width="1.400"/></svg><span>12°C&nbsp; Cloudy</span></button>
    <div class="sys">
      <svg class="up" width="18" height="18"><use href="#chev-lg"/></svg>
      <svg width="20" height="20" viewBox="0 0 20 20"><path d="M5 0h10v6H5z" fill="#eee"/><path d="M0 6h20v8H0z" fill="#888"/><path d="M2 8h16v2H2z" fill="#333"/><path d="M5 12h10v8H5z" fill="#eef"/><path d="M8 14h4v4H8z" fill="#3a96dd"/></svg>
      <svg width="20" height="16" viewBox="0 0 20 16" fill="none" stroke="#fff" stroke-width="1.300"><path d="M7 4h11v9H5V9M19 7v3M1 3h5v3c0 3-5 3-5 0zM2 0v3M5 0v3"/><path d="M8 6h4v5H8z" fill="#fff"/></svg>
      <svg width="20" height="14" viewBox="0 0 20 14"><path d="M5 13a5 5 0 0 1 0-9 6 6 0 0 1 10 0 5 5 0 0 1 0 9z" fill="#0f78d4"/><path d="M2 11l9-5 8 4c0 2-2 3-4 3H5z" fill="#28a8ea"/></svg>
      <svg width="18" height="18" viewBox="0 0 18 18" fill="none" stroke="#fff" stroke-width="1.300"><path d="M1 16A15 15 0 0 1 16 2" opacity=".6"/><path d="M5 16A11 11 0 0 1 16 6M9 16a8 8 0 0 1 7-6M13 16a4 4 0 0 1 3-2"/></svg>
      <svg width="21" height="18" viewBox="0 0 21 18" fill="none" stroke="#fff" stroke-width="1.300"><path d="M1 6h3l4-4v14l-4-4H1zM11 6c2 2 2 4 0 6"/><path d="M14 4c3 3 3 7 0 10M17 2c4 4 4 10 0 14" opacity=".5"/></svg>
    </div>
    <div class="clock">13:17<br>03/11/2023</div>
    <button class="note" aria-label="Notifications"><svg width="20" height="20" viewBox="0 0 20 20" fill="none" stroke="#fff" stroke-width="1.500"><path d="M1 1h18v14h-6l-3 4-3-4H1z"/></svg></button>
  </div>
</div>
</body>
</html>
```

FILE: styles.css
```css
* { box-sizing: border-box; }
html, body { height: 100%; }
body {
  margin: 0; display: flex; flex-direction: column; overflow: hidden;
  font: 14px/20px "Open Sans", "Noto Sans", sans-serif; color: #444; background: #fff;
}
h1, h2, h3, h4, p, ul { margin: 0; padding: 0; font-weight: 400; }
ul { list-style: none; }
a { color: inherit; text-decoration: none; }
button { font: inherit; color: inherit; background: none; border: 0; padding: 0; white-space: nowrap; }
input { font: inherit; color: inherit; margin: 0; }
svg { flex: none; }
.sprite { display: none; }
.up { transform: rotate(180deg); }

/* Title bar */
.titlebar { flex: none; height: 43px; background: #106ebe; display: flex; align-items: center; position: relative; }
.quick { width: 351px; padding-left: 23px; display: flex; align-items: center; gap: 14px; }
.tb { display: grid; place-items: center; }
.search { width: 427px; height: 33px; margin-bottom: 4px; background: #deecf9; display: flex; align-items: center; gap: 16px; padding-left: 24px; color: #0f4c84; }
.search input { flex: 1; min-width: 0; border: 0; background: none; outline: 0; }
.search input::placeholder { color: #0f4c84; opacity: 1; }
.art { position: absolute; right: 0; top: 0; }
.window { margin-left: auto; display: flex; position: relative; }
.window button { width: 57px; height: 43px; }
.window .avatar-sm { width: 30px; height: 30px; margin: 6px 16px 0 0; border-radius: 50%; background: #d13438; color: #fff; font-size: 12px; }

/* Shell */
.shell { flex: 1; min-height: 0; display: flex; }
.rail { width: 60px; flex: none; padding-top: 8px; border-right: 1px solid #d2d0ce; }
.rail a { height: 39px; margin-bottom: 19px; display: grid; place-items: center; border-left: 3px solid transparent; margin-left: 6px; padding-right: 10px; }
.rail .on { border-color: #0f78d4; }
.app { flex: 1; min-width: 0; display: flex; flex-direction: column; }

/* Ribbon */
.ribbon { flex: none; background: #f3f2f1; border-bottom: 1px solid #c8c6c4; box-shadow: 0 2px 6px rgba(0,0,0,.14); position: relative; }
.tabs { height: 41px; display: flex; align-items: center; gap: 31px; padding: 0 14px 3px 21px; font-size: 16px; }
.tabs button { height: 36px; border-bottom: 4px solid transparent; padding-top: 4px; }
.tabs .on { font-weight: 600; border-color: #106ebe; }
.try { margin-left: auto; display: flex; align-items: center; gap: 8px; font-size: 16px; }
.toggle { width: 47px; height: 20px; border: 2px solid #444; border-radius: 10px; display: flex; align-items: center; justify-content: space-between; padding: 0 6px 0 3px; font-size: 12px; }
.toggle input { appearance: none; width: 10px; height: 10px; border-radius: 50%; background: #444; }
.groups { display: flex; height: 116px; padding-bottom: 2px; position: relative; }
.group { position: relative; flex: none; display: flex; flex-direction: column; padding-top: 2px; }
.group::after { content: ""; position: absolute; right: 0; top: 2px; bottom: 3px; width: 1px; background: #979593; }
.group h2 { margin-top: auto; font-size: 12px; line-height: 14px; text-align: center; }
.tools { display: flex; }
.g-new { width: 127px; } .g-new .tools { padding-left: 10px; }
.g-delete { width: 236px; } .g-delete .tools { padding-left: 14px; }
.g-respond { width: 279px; } .g-respond .tools { padding-left: 9px; }
.g-teams { width: 80px; } .g-speech { width: 71px; } .g-lang { width: 85px; }
.g-teams .tools, .g-speech .tools, .g-lang .tools, .center .tools { padding: 0; justify-content: center; }
.g-quick { width: 345px; } .g-quick .tools { padding: 2px 12px 0; }
.g-move { width: 190px; } .g-move .tools { padding-left: 10px; }
.g-tags { width: 264px; } .g-tags .tools { padding-left: 9px; }
.g-find { width: 149px; } .g-find .tools { padding-left: 11px; }
.big { display: flex; flex-direction: column; align-items: center; gap: 3px; padding-top: 2px; }
.big > svg, .glyphs svg { width: 40px; height: 40px; }
.big span { font-size: 14px; line-height: 20px; }
.big .glyphs { position: relative; width: 40px; height: 40px; }
.glyphs i { position: absolute; font-style: normal; font-weight: 700; }
.glyphs .kana { right: 0; top: 0; font: 700 19px/20px "Noto Sans CJK JP", sans-serif; color: #107c10; }
.glyphs .latin { left: 2px; bottom: 0; font-size: 25px; line-height: 26px; color: #106ebe; }
.w52 { width: 52px; } .w54 { width: 54px; } .w56 { width: 56px; } .w58 { width: 58px; } .w60 { width: 60px; } .w66 { width: 66px; } .w76 { width: 76px; }
.c { width: 10px; height: 10px; }
.stack { display: flex; flex-direction: column; margin-top: -2px; }
.s104 { width: 104px; }
.resp { padding: 2px 0 0 5px; }
.small { height: 29px; display: flex; align-items: center; gap: 4px; font-size: 14px; }
.small > svg:first-child { width: 20px; height: 20px; }
.small:disabled { color: #a6a6a6; }
.people { width: 128px; height: 26px; border: 1px solid #c8c6c4; background: #fff; padding: 0 3px; }
.people::placeholder { color: #605e5c; opacity: 1; }
.gallery { flex: 1; height: 78px; display: flex; background: #fff; border: 1px solid #c8c6c4; }
.steps { flex: 1; display: grid; grid-template-columns: 149px 1fr; grid-auto-rows: 24px; padding: 3px 0 0 3px; }
.steps button { display: flex; align-items: center; gap: 6px; color: #555; }
.steps svg { width: 20px; height: 20px; margin-bottom: 4px; }
.spin { width: 19px; display: flex; flex-direction: column; border-left: 1px solid #c8c6c4; }
.spin button { flex: 1; display: grid; place-items: center; border-bottom: 1px solid #c8c6c4; color: #aaa; }
.spin .more { border: 1px solid #777; }
.launch { position: absolute; right: 5px; bottom: 3px; line-height: 10px; }
.collapse { margin: auto 10px 0 auto; line-height: 10px; }

/* Folder pane */
.panes { flex: 1; min-height: 0; display: flex; }
.folders { width: 290px; flex: none; background: #faf9f8; border-right: 1px solid #d2d0ce; overflow: hidden; }
.fold { display: block; height: 12px; margin: 5px 0 0 268px; line-height: 12px; }
.folders h2 { height: 30px; margin-top: 4px; padding-left: 11px; display: flex; align-items: center; font-size: 17px; color: #333; }
.folders li { height: 30px; display: flex; align-items: center; padding-left: 27px; font-size: 14px; }
.top { padding: 3px 0 11px; margin: 0 6px 8px 7px; border-bottom: 1px solid #d2d0ce; }
.top li { padding-left: 20px; }
.tree li { padding-left: 36px; }
.folders .has { padding-left: 24px; }
.folders .roots .has { padding-left: 15px; }
.has svg { width: 8px; height: 14px; margin-right: 4px; }

/* Message list */
.list { width: 430px; flex: none; display: flex; flex-direction: column; border-right: 1px solid #d2d0ce; }
.filters { height: 54px; flex: none; display: flex; align-items: flex-end; padding: 0 44px 0 33px; font-size: 17px; }
.filters button { height: 36px; margin-right: 19px; padding-bottom: 4px; border-bottom: 2px solid transparent; }
.filters .on { color: #0f6cbd; border-color: #0f6cbd; }
.filters .sort { margin: 0 20px 0 auto; font-size: 14px; }
.filters .dir { margin: 0; }
.scroller { flex: 1; min-height: 0; display: flex; }
.messages { width: 394px; flex: none; overflow: hidden; border-top: 1px solid #e1dfdd; }
.messages h3 { height: 26px; background: #f0f0f0; border-bottom: 1px solid #dcdcdc; display: flex; align-items: center; gap: 11px; padding-left: 11px; font-size: 12px; font-weight: 700; color: #444; }
.msg { height: 124px; border-bottom: 1px solid #dcdcdc; padding: 12px 29px 0 34px; display: grid; grid-template-columns: 1fr auto; grid-template-rows: 25px 18px 52px; }
.sel { background: #e1e1e1; }
.msg h4 { font-size: 17px; line-height: 26px; color: #222; white-space: nowrap; }
.marks { display: flex; gap: 11px; justify-content: flex-end; }
.pad { padding-right: 9px; }
.cat { width: 11px; height: 21px; border: 1px solid; }
.grey { background: #c3cbce; border-color: #97a5aa; }
.orange { background: #e3926b; border-color: #ca5010; }
.teal { background: #58d3da; border-color: #00b7c3; }
.bang { width: 4px; height: 20px; }
.subj, .msg time { font-size: 12px; line-height: 18px; color: #222; white-space: nowrap; }
.subj, .prev { font-family: "Noto Sans", "Open Sans", sans-serif; }
.msg time { text-align: right; }
.prev { font-size: 12px; line-height: 17px; color: #666; white-space: nowrap; padding-top: 1px; }
.vbar { width: 19px; margin: 2px 0 1px 9px; display: flex; flex-direction: column; }
.vbar button, .hbar button { width: 19px; height: 19px; border: 1px solid #979593; background: #fff; display: grid; place-items: center; flex: none; }
.vtrack { flex: 1; background: #f3f3f3; }
.vthumb { height: 57%; border: 1px solid #979593; background: #fff; }

/* Reading pane */
.reading { flex: 1; min-width: 0; display: flex; flex-direction: column; padding: 26px 24px 1px 28px; color: #333; }
.reading h1 { font-size: 22px; line-height: 24px; color: #000; }
.head { display: flex; margin-top: 9px; gap: 13px; }
.avatar { width: 60px; height: 60px; margin-top: 12px; border-radius: 50%; background: #038387; color: #fff; font-size: 22px; display: grid; place-items: center; position: relative; }
.avatar i { position: absolute; right: 0; bottom: 0; width: 18px; height: 18px; border-radius: 50%; background: #fff; border: 2px solid #b8c8ce; }
.who { padding-top: 19px; }
.from { font-size: 17px; line-height: 24px; color: #444; }
.to { display: flex; align-items: center; line-height: 24px; }
.to span { color: #777; width: 28px; }
.to i { width: 12px; height: 12px; border: 1px solid #a9c3cf; border-radius: 50%; margin-right: 4px; }
.side { margin: 0 4px 0 auto; text-align: right; }
.actions { display: flex; gap: 10px; }
.actions button { height: 40px; display: flex; align-items: center; justify-content: center; gap: 11px; border: 1px solid #b0b0b0; }
.seg { display: flex; }
.seg button { padding: 0 14px; }
.seg button + button { border-left: 0; }
.actions .sq { width: 41px; }
.side time { display: block; line-height: 20px; margin-top: 5px; color: #666; }
.tag { align-self: flex-start; height: 21px; margin-top: 5px; padding: 0 7px 0 10px; border-left: 6px solid #c3cbce; background: #edf1f2; font-size: 12px; line-height: 21px; }
.body { margin: 69px 0 0 -9px; font: 17px/24px Lato, "Open Sans", sans-serif; color: #000; flex: 1; }
.sign { padding-top: 20px; }
.hbar { display: flex; gap: 1px; margin-left: -21px; }
.hthumb { flex: 1; height: 19px; border: 1px solid #979593; }

/* Status bar */
.status { flex: none; height: 28px; background: #f3f2f1; border-top: 1px solid #c8c6c4; display: flex; align-items: center; padding: 0 11px 0 10px; font-size: 12px; }
.online { margin: 0 23px 0 auto; }
.view { width: 50px; height: 27px; display: grid; place-items: center; }
.view.on { background: #d2d0ce; }
.z { width: 20px; height: 20px; display: grid; place-items: center; }
.zoom { appearance: none; width: 126px; height: 16px; background: linear-gradient(#444, #444) center / 100% 1px no-repeat; }
.zoom::-webkit-slider-thumb { appearance: none; width: 6px; height: 14px; background: #333; }
.pct { width: 43px; text-align: right; }

/* Taskbar */
.taskbar { flex: none; height: 50px; background: #1a2642; display: flex; color: #fff; }
.start { width: 60px; display: grid; place-items: center; }
.find { width: 360px; background: #f2f2f2; border: 1px solid #bbb; display: flex; align-items: center; gap: 12px; padding: 0 5px 0 14px; color: #222; }
.find input { flex: 1; min-width: 0; border: 0; background: none; font-size: 18px; outline: 0; }
.find input::placeholder { color: #333; opacity: 1; }
.promo { width: 89px; height: 40px; border-radius: 8px; background: #e2e2e2; display: grid; place-items: center; }
.apps { display: flex; gap: 2px; margin-left: 2px; }
.apps button { width: 60px; display: grid; place-items: center; position: relative; }
.run::after { content: ""; position: absolute; left: 5px; right: 5px; bottom: 0; height: 3px; background: #76b9ed; }
.active { background: #48546c; }
.active::after { left: 0; right: 0; }
.cx { width: 30px; height: 30px; background: #333; font-size: 12px; line-height: 30px; }
.cx b { color: #2aa7df; }
.tray { margin-left: auto; display: flex; align-items: center; border-right: 1px solid #5a657c; margin-right: 4px; padding-right: 26px; }
.weather { display: flex; align-items: center; gap: 8px; font-size: 18px; margin-right: 28px; }
.sys { display: flex; align-items: center; gap: 11px; margin-right: 12px; }
.clock { width: 76px; text-align: center; line-height: 22px; margin-right: 23px; white-space: nowrap; }
```
